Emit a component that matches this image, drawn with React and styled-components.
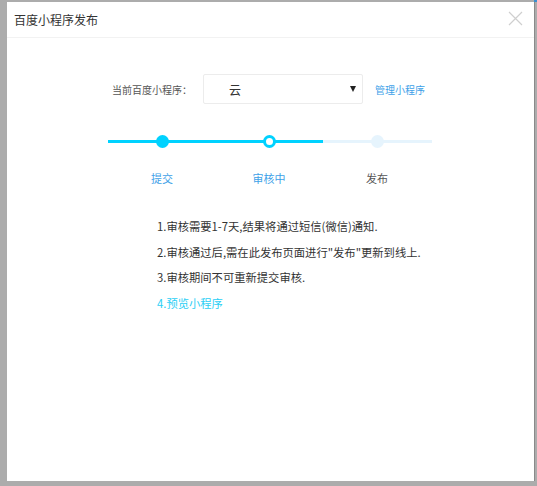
import React from "react";
import styled, { createGlobalStyle } from "styled-components";

const Global = createGlobalStyle`
  html, body { margin: 0; padding: 0; }
  body {
    width: 537px; height: 486px; overflow: hidden;
    background: #acacac;
    font-family: "Noto Sans CJK SC", "Liberation Sans", sans-serif;
  }
`;

const Backdrop = styled.div`
  width: 537px;
  height: 486px;
  padding: 2px 3px 5px 7px;
  box-sizing: border-box;
  display: flex;
  position: relative;
`;

const BlueMark = styled.div`
  position: absolute;
  right: 0;
  top: 0;
  width: 3px;
  height: 2px;
  background: #3a8fd0;
`;

const Modal = styled.div`
  flex: 1;
  background: #fff;
  display: flex;
  flex-direction: column;
  box-shadow: 1px 0 0 #8a8a8a;
`;

const Header = styled.div`
  height: 35px;
  border-bottom: 1px solid #f2f2f2;
  display: flex;
  align-items: center;
  justify-content: space-between;
  padding: 0 11px 0 7px;
`;

const Title = styled.div`
  font-size: 12px;
  color: #333;
`;

const Close = styled.div`
  width: 15px;
  height: 15px;
  margin-top: -3px;
  display: flex;
`;

const Body = styled.div`
  display: flex;
  flex-direction: column;
  padding-top: 36px;
`;

const SelectRow = styled.div`
  display: flex;
  align-items: center;
  padding-left: 105px;
`;

const Label = styled.div`
  font-size: 10px;
  color: #555;
  width: 91px;
`;

const Select = styled.div`
  border: 1px solid #ececec;
  border-radius: 2px;
  display: flex;
  align-items: center;
  justify-content: space-between;
  padding: 0 6px 0 25px;
  box-sizing: border-box;
  width: 160px;
  height: 30px;
  font-size: 12px;
  color: #333;
`;

const Arrow = styled.span`
  width: 0;
  height: 0;
  border-left: 3.5px solid transparent;
  border-right: 3.5px solid transparent;
  border-top: 6px solid #222;
`;

const Link = styled.a`
  margin-left: 12px;
  font-size: 10px;
  color: #3ea1e8;
  text-decoration: none;
`;

const Steps = styled.div`
  margin: 31px 0 0 101px;
  width: 324px;
  position: relative;
  height: 51px;
`;

const Track = styled.div`
  position: absolute;
  left: 0;
  right: 0;
  top: 5px;
  height: 3px;
  background: #e6f4fd;
`;

const TrackFill = styled.div`
  position: absolute;
  left: 0;
  top: 5px;
  height: 3px;
  background: #00d2ff;
`;

const StepItem = styled.div`
  position: absolute;
  top: 0;
  width: 60px;
  margin-left: -30px;
  display: flex;
  flex-direction: column;
  align-items: center;
`;

const Dot = styled.div`
  width: 13px;
  height: 13px;
  border-radius: 50%;
  box-sizing: border-box;
  background: ${(p) => (p.$kind === "done" ? "#00d2ff" : p.$kind === "current" ? "#fff" : "#e6f4fd")};
  border: ${(p) => (p.$kind === "current" ? "3px solid #00d2ff" : "none")};
`;

const StepLabel = styled.div`
  margin-top: 22px;
  font-size: 11px;
  color: ${(p) => (p.$active ? "#3ea1e8" : "#555")};
`;

const Notes = styled.ol`
  list-style: none;
  margin: 32px 0 0 150px;
  padding: 0;
  display: flex;
  flex-direction: column;
  gap: 9.5px;
`;

const Note = styled.li`
  font-size: 11.3px;
  line-height: 16px;
  color: ${(p) => (p.$link ? "#2ccff5" : "#333")};
`;

const steps = [
  { x: 54, kind: "done", label: "提交", active: true },
  { x: 161, kind: "current", label: "审核中", active: true },
  { x: 269, kind: "todo", label: "发布", active: false },
];

export default function App() {
  return (
    <>
      <Global />
      <Backdrop>
        <BlueMark />
        <Modal>
          <Header>
            <Title>百度小程序发布</Title>
            <Close>
              <svg width="15" height="15" viewBox="0 0 15 15">
                <path d="M1 1 L14 14 M14 1 L1 14" stroke="#cfcfcf" strokeWidth="1.2" fill="none" />
              </svg>
            </Close>
          </Header>
          <Body>
            <SelectRow>
              <Label>当前百度小程序：</Label>
              <Select>
                <span>云</span>
                <Arrow />
              </Select>
              <Link>管理小程序</Link>
            </SelectRow>
            <Steps>
              <Track />
              <TrackFill style={{ width: 215 }} />
              {steps.map((s) => (
                <StepItem key={s.label} style={{ left: s.x }}>
                  <Dot $kind={s.kind} />
                  <StepLabel $active={s.active}>{s.label}</StepLabel>
                </StepItem>
              ))}
            </Steps>
            <Notes>
              <Note>1.审核需要1-7天,结果将通过短信(微信)通知.</Note>
              <Note>2.审核通过后,需在此发布页面进行"发布"更新到线上.</Note>
              <Note>3.审核期间不可重新提交审核.</Note>
              <Note $link>4.预览小程序</Note>
            </Notes>
          </Body>
        </Modal>
      </Backdrop>
    </>
  );
}
